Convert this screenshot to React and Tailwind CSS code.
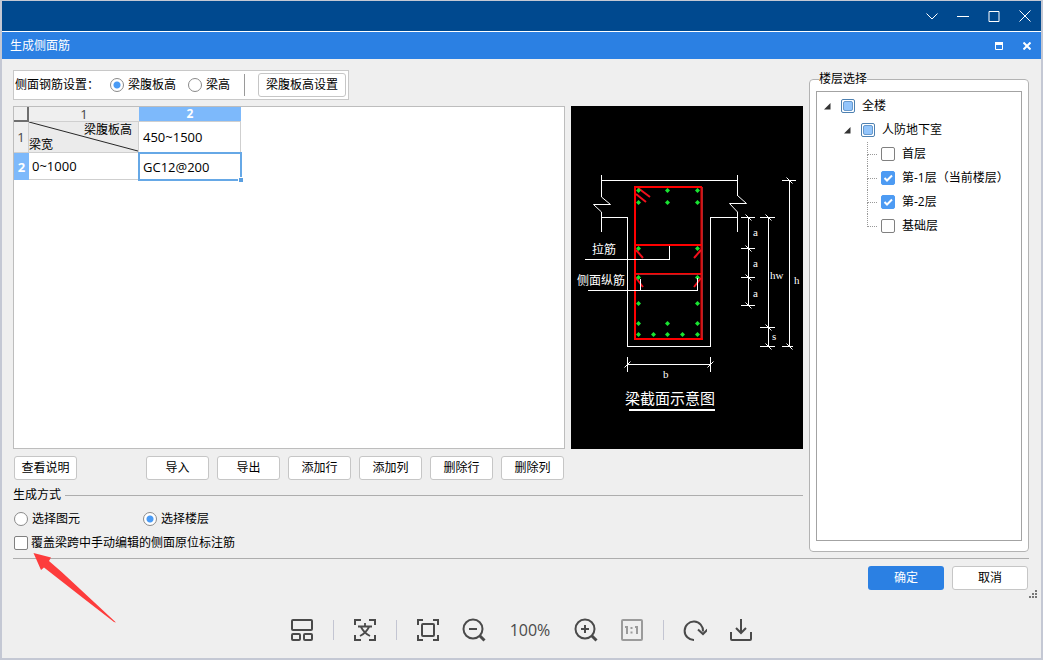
import { useState } from "react";
import clsx from "clsx";

const buttonClass =
  "h-6 rounded-[3px] border border-[#c6c6c6] bg-white text-xs text-black hover:bg-[#f5f9ff]";
const radioClass =
  "m-0 size-3.5 shrink-0 appearance-none rounded-full border border-[#8a8a8a] bg-white checked:bg-[radial-gradient(circle,#4a9bf5_3px,#fff_4px)]";

const tableActions = ["导入", "导出", "添加行", "添加列", "删除行", "删除列"];

const floors = [
  { id: "f1", label: "首层", checked: false },
  { id: "b1", label: "第-1层（当前楼层）", checked: true },
  { id: "b2", label: "第-2层", checked: true },
  { id: "base", label: "基础层", checked: false },
];

// Rebar positions in the beam section
const rebars = [
  [67, 84], [96, 84], [126, 84],
  [67, 96], [96, 96], [126, 96],
  [67, 142], [126, 142],
  [67, 171], [126, 171],
  [67, 197], [126, 197],
  [67, 217], [96, 217], [126, 217],
  [67, 228], [82, 228], [96, 228], [111, 228], [126, 228],
];

// [x, y, left, right] of every tick on the vertical dimension lines
const ticks = [
  [177, 111, 170, 184], [177, 142, 170, 184], [177, 171, 170, 184], [177, 199, 170, 184],
  [197, 111, 189, 204], [197, 221, 189, 204], [197, 240, 189, 204],
  [218, 74, 211, 225], [218, 240, 211, 222],
];

function AppTitleBar() {
  return (
    <header className="flex h-[30px] items-center justify-end bg-[#00498f] pr-px text-white">
      <button aria-label="更多" className="flex w-[31px] justify-center">
        <svg width="12" height="12" fill="none" stroke="currentColor">
          <path d="M0.500 3.500 6 9l5.500-5.500" />
        </svg>
      </button>
      <button aria-label="最小化" className="flex w-[31px] justify-center">
        <svg width="12" height="12" stroke="currentColor">
          <path d="M0 6.500h12" />
        </svg>
      </button>
      <button aria-label="最大化" className="flex w-[31px] justify-center">
        <svg width="12" height="12" fill="none" stroke="currentColor">
          <path d="M1 1.500h10v10H1z" />
        </svg>
      </button>
      <button aria-label="关闭" className="flex w-[31px] justify-center">
        <svg width="12" height="12" stroke="currentColor">
          <path d="m0.500 0.500 11 11m0-11-11 11" />
        </svg>
      </button>
    </header>
  );
}

function DialogTitleBar() {
  return (
    <div className="mt-px flex h-[27px] items-center bg-[#2b80e3] pl-2 text-white">
      <h1 className="flex-1 text-xs">生成侧面筋</h1>
      <button aria-label="还原" className="flex w-7 justify-center">
        <svg width="8" height="8" fill="none" stroke="currentColor">
          <path d="M0.500 1v6.500h7V1" />
          <path d="M0 1.500h8" strokeWidth="3" />
        </svg>
      </button>
      <button aria-label="关闭对话框" className="flex w-7 justify-center">
        <svg width="8" height="8" stroke="currentColor" strokeWidth="2">
          <path d="m0.500 0.500 7 7m0-7-7 7" />
        </svg>
      </button>
    </div>
  );
}

function SettingsBar() {
  const [mode, setMode] = useState("web");

  return (
    <div className="flex h-[30px] items-center self-start border border-[#c8c8c8] bg-white pr-0.5 pl-px">
      <span className="w-[95px]">侧面钢筋设置：</span>
      <label className="flex w-[78px] items-center gap-1">
        <input
          type="radio"
          name="heightMode"
          className={radioClass}
          checked={mode === "web"}
          onChange={() => setMode("web")}
        />
        梁腹板高
      </label>
      <label className="flex w-14 items-center gap-1">
        <input
          type="radio"
          name="heightMode"
          className={radioClass}
          checked={mode === "beam"}
          onChange={() => setMode("beam")}
        />
        梁高
      </label>
      <span className="mr-[13px] h-[22px] w-px bg-[#9a9a9a]" />
      <button className={clsx(buttonClass, "w-[88px]")}>梁腹板高设置</button>
    </div>
  );
}

function RebarTable() {
  return (
    <div className="min-w-0 flex-1 border border-[#bdbdbd] bg-white">
      <table className="w-[227px] table-fixed border-separate border-spacing-0 text-[13px] leading-4">
        <colgroup>
          <col className="w-[15px]" />
          <col className="w-[110px]" />
          <col className="w-[102px]" />
        </colgroup>
        <thead>
          <tr className="h-[15px]">
            <td className="border-r-2 border-b-2 border-[#6e6e6e] bg-[#f0f0f0] p-0" />
            <th className="border-b border-[#cfcfcf] bg-[#efefef] p-0 text-[13px] leading-3.5 font-normal text-[#444]">
              1
            </th>
            <th className="border-b border-[#cfcfcf] bg-[#7db9fb] p-0 text-xs leading-3.5 font-bold text-white">
              2
            </th>
          </tr>
        </thead>
        <tbody>
          <tr className="h-[31px]">
            <th className="border-r border-b border-[#cfcfcf] bg-[#efefef] p-0 font-normal text-[#444]">
              1
            </th>
            <td className="relative border-r border-b border-[#cfcfcf] bg-[#ebebeb] p-0 text-xs leading-[15px]">
              <svg
                className="absolute inset-0 size-full"
                viewBox="0 0 110 31"
                preserveAspectRatio="none"
              >
                <path d="M0 0 110 30" stroke="#222" />
              </svg>
              <div className="relative pr-1.5 text-right">梁腹板高</div>
              <div className="relative">梁宽</div>
            </td>
            <td className="border-r border-b border-[#cfcfcf] px-1 py-0">450~1500</td>
          </tr>
          <tr className="h-[27px]">
            <th className="bg-[#7db9fb] p-0 font-bold text-white">2</th>
            <td className="border-r border-b border-[#cfcfcf] px-[3px] py-0">0~1000</td>
            <td className="relative px-1 py-0 outline-2 -outline-offset-1 outline-[#66a8e6]">
              GC12@200
              <span className="absolute -right-0.5 -bottom-0.5 size-[5px] border-t border-l border-white bg-[#5a9fe0]" />
            </td>
          </tr>
        </tbody>
      </table>
    </div>
  );
}

function BeamSection() {
  return (
    <svg
      viewBox="0 0 232 343"
      className="h-[343px] w-[232px] shrink-0 bg-black"
      role="img"
      aria-label="梁截面示意图"
    >
      {/* Concrete outline */}
      <g fill="none" stroke="#fff" shapeRendering="crispEdges">
        <path d="M30.500 74.500h136M30.500 111.500h26v129h83v-129h27" />
        <path d="M30.500 69v22M30.500 106v20M166.500 69v21M166.500 106v20" />
      </g>
      <g fill="none" stroke="#fff">
        <path d="m30.500 91 9 7.500h-17l8 7.500M166.500 89.500l9 8h-17l8 8.500" />
      </g>

      {/* Stirrup and ties */}
      <g fill="none" strokeWidth="2">
        <path d="M131 81v152M64 168h67" stroke="#b02226" />
        <path d="M131 81H64v152h68M64 139h67" stroke="#f00" />
        <path d="M130 82v151M64 167.500h67" stroke="#f00" strokeWidth="1" />
        <path
          d="m67 82 12 9M65 88l10 8M65 144l7 8M130 144l-7 8M65 172l7 9M130 172l-7 9"
          stroke="#f0101c"
        />
      </g>
      <g fill="#19e432">
        {rebars.map(([x, y]) => (
          <path key={`${x}-${y}`} d={`M${x - 2} ${y + 0.5}l2.500-2.500 2.500 2.500-2.500 2.500z`} />
        ))}
      </g>

      {/* Leaders and dimension lines */}
      <g fill="none" stroke="#fff" shapeRendering="crispEdges">
        <path d="M14 153.500h84.500V140M17 184.500h109.500V172M69.500 173v11" />
        <path d="M177.500 111v89M197.500 111v130M218.500 74v167" />
        <path d="M56 258.500h84M56.500 251v15M139.500 251v15" />
        {ticks.map(([x, y, x1, x2]) => (
          <path key={`${x}-${y}`} d={`M${x1} ${y + 0.5}H${x2}`} />
        ))}
      </g>
      <g stroke="#fff">
        {ticks.map(([x, y]) => (
          <path key={`${x}-${y}`} d={`M${x - 2.5} ${y - 2.5}l6 6`} />
        ))}
        <path d="m53.500 261.500 6-6M136.500 261.500l6-6" />
        <path d="M58 304h86" strokeWidth="2" />
      </g>

      <g fill="#fff" className="text-xs">
        <text x="21" y="148">拉筋</text>
        <text x="6" y="179">侧面纵筋</text>
      </g>
      <text x="54" y="298" fill="#fff" className="text-[15px]">
        梁截面示意图
      </text>
      <g fill="#fff" className="font-['Liberation_Serif',serif] text-[11px]">
        <text x="182" y="130">a</text>
        <text x="182" y="161">a</text>
        <text x="182" y="191">a</text>
        <text x="199" y="173">hw</text>
        <text x="223" y="178">h</text>
        <text x="201" y="234">s</text>
        <text x="92" y="272">b</text>
      </g>
    </svg>
  );
}

function GenerateMode() {
  const [mode, setMode] = useState("floor");

  return (
    <section className="mt-1.5 flex flex-col gap-1.5 leading-[18px]">
      <div className="flex items-center gap-1">
        <h2>生成方式</h2>
        <span className="h-px flex-1 bg-[#adadad]" />
      </div>
      <div className="flex pl-px">
        <label className="flex w-[129px] items-center gap-1">
          <input
            type="radio"
            name="target"
            className={radioClass}
            checked={mode === "element"}
            onChange={() => setMode("element")}
          />
          选择图元
        </label>
        <label className="flex items-center gap-1">
          <input
            type="radio"
            name="target"
            className={radioClass}
            checked={mode === "floor"}
            onChange={() => setMode("floor")}
          />
          选择楼层
        </label>
      </div>
      <div className="relative flex pl-px">
        <label className="flex items-center gap-[3px]">
          <FloorCheckbox />
          覆盖梁跨中手动编辑的侧面原位标注筋
        </label>
        {/* Hint arrow */}
        <svg
          width="84"
          height="72"
          className="pointer-events-none absolute top-[18px] left-5 z-10"
          aria-hidden="true"
        >
          <path
            d="m0.500 1 17.500 4.500-2 3.500Q29 20 40 30.500L83 70.500 81 70 50 46 11 15.500 8 18z"
            fill="#fd3c3c"
          />
        </svg>
      </div>
    </section>
  );
}

function FloorCheckbox({ checked = false, partial = false }) {
  const [value, setValue] = useState(checked);

  if (partial) {
    return (
      <input
        type="checkbox"
        ref={(el) => {
          if (el) el.indeterminate = true;
        }}
        className="m-0 size-3.5 shrink-0 appearance-none rounded-[2px] border border-[#4d80b0] bg-white before:m-px before:block before:size-2.5 before:rounded-[2px] before:border before:border-[#6899cc] before:bg-[#93c5fb] before:content-['']"
      />
    );
  }

  return (
    <span className="relative flex size-3.5 shrink-0">
      <input
        type="checkbox"
        checked={value}
        onChange={(e) => setValue(e.target.checked)}
        className="m-0 size-3.5 appearance-none rounded-[2px] border border-[#808080] bg-white checked:border-[#4d9bf3] checked:bg-[#4d9bf3]"
      />
      {value && (
        <svg
          viewBox="0 0 14 14"
          className="pointer-events-none absolute inset-0"
          fill="none"
          stroke="#fff"
          strokeWidth="2"
        >
          <path d="m3.500 7 2.500 2.500 5-5" />
        </svg>
      )}
    </span>
  );
}

function Expander() {
  return (
    <button aria-label="折叠" className="flex w-[7px] justify-center">
      <svg width="7" height="7">
        <path d="M6.500 0v6.500H0z" fill="#333" />
      </svg>
    </button>
  );
}

function FloorTree() {
  return (
    <fieldset className="flex w-[220px] shrink-0 flex-col rounded border border-[#b3b3b3] bg-white px-1.5 pt-[3px] pb-2.5">
      <legend className="ml-[3px] leading-[18px]">楼层选择</legend>
      <div className="flex-1 border border-[#a3a3a3] pt-0.5 pl-[7px]">
        <div className="flex h-6 items-center">
          <Expander />
          <label className="ml-2.5 flex items-center gap-[7px]">
            <FloorCheckbox partial />
            全楼
          </label>
        </div>
        <div className="flex h-6 items-center pl-5">
          <Expander />
          <label className="ml-2.5 flex items-center gap-[7px]">
            <FloorCheckbox partial />
            人防地下室
          </label>
        </div>
        <ul className="pl-[43px]">
          {floors.map((floor, index) => (
            <li key={floor.id} className="flex h-6 items-center gap-1">
              <span className="flex h-6 w-2.5 flex-col">
                <span className="h-[13px] border-b border-l border-dotted border-[#999]" />
                {index < floors.length - 1 && (
                  <span className="flex-1 border-l border-dotted border-[#999]" />
                )}
              </span>
              <label className="flex items-center gap-[7px]">
                <FloorCheckbox checked={floor.checked} />
                {floor.label}
              </label>
            </li>
          ))}
        </ul>
      </div>
    </fieldset>
  );
}

function ToolButton({ label, className, children }) {
  return (
    <button aria-label={label} className={clsx("size-6", className)}>
      <svg viewBox="0 0 24 24" fill="none" stroke="currentColor" strokeWidth="2">
        {children}
      </svg>
    </button>
  );
}

function Separator() {
  return <span className="-mx-[3px] h-5 w-px bg-[#c3c5d2]" />;
}

function ViewerToolbar() {
  return (
    <nav className="mt-[28px] flex items-center justify-center gap-[22px] text-[#4a4a4a]">
      <ToolButton label="缩略图">
        <rect x="2" y="2" width="20" height="10" rx="1" />
        <rect x="2" y="16" width="8" height="6" rx="1" />
        <rect x="14" y="16" width="8" height="6" rx="1" />
      </ToolButton>
      <Separator />
      <ToolButton label="文字识别">
        <path d="M2 7V2h6M16 2h6v5M22 17v5h-6M8 22H2v-5" />
        <path d="M12 5v3M5 8.500h14M8 9q3 6 9 9M16 9q-3 6-9 9" strokeWidth="1.800" />
      </ToolButton>
      <Separator />
      <ToolButton label="适应窗口">
        <path d="M2 7V2h5M17 2h5v5M22 17v5h-5M7 22H2v-5" />
        <rect x="6" y="6" width="12" height="12" rx="1" />
      </ToolButton>
      <ToolButton label="缩小">
        <circle cx="11" cy="11" r="9.500" />
        <path d="M7 11h8" />
        <path d="m17.500 17.500 5 5" strokeWidth="3" />
      </ToolButton>
      <span className="w-11 text-center text-base leading-6">100%</span>
      <ToolButton label="放大">
        <circle cx="11" cy="11" r="9.500" />
        <path d="M7 11h8M11 7v8" />
        <path d="m17.500 17.500 5 5" strokeWidth="3" />
      </ToolButton>
      <ToolButton label="原始大小" className="text-[#9b9b9b]">
        <rect x="2" y="2" width="20" height="20" rx="1" />
        <path d="M5 9h2v7M15 9h2v7M11.500 9v2M11.500 13.500v2" strokeWidth="2" />
      </ToolButton>
      <Separator />
      <ToolButton label="旋转">
        <path d="M11 22a9.200 9.200 0 1 1 9-8.500" />
        <path d="m15 11.500 5 4.500 4.500-4.500" />
      </ToolButton>
      <ToolButton label="下载">
        <path d="M2 14v7q0 1 1 1h18q1 0 1-1v-7M12 1v14M7 10l5 5 5-5" />
      </ToolButton>
    </nav>
  );
}

export default function App() {
  return (
    <div className="flex min-h-screen flex-col border-x-2 border-t border-b-2 border-[#c4c8d4] bg-white font-['Open_Sans','Noto_Sans_CJK_SC',sans-serif] text-xs text-black">
      <AppTitleBar />
      <DialogTitleBar />
      <main className="flex flex-1 flex-col bg-[#efefef] pt-[11px]">
        <div className="mr-3 ml-[11px] flex gap-1.5">
          <div className="flex min-w-0 flex-1 flex-col">
            <SettingsBar />
            <div className="mt-1.5 flex gap-1.5">
              <RebarTable />
              <BeamSection />
            </div>
            <div className="mt-[7px] flex gap-2 pl-px">
              <button className={clsx(buttonClass, "mr-[61px] w-[63px]")}>查看说明</button>
              {tableActions.map((action) => (
                <button key={action} className={clsx(buttonClass, "w-[63px]")}>
                  {action}
                </button>
              ))}
            </div>
            <GenerateMode />
          </div>
          <FloorTree />
        </div>
        <footer className="mt-1.5 mr-3 ml-[11px] flex justify-end gap-2 border-t border-[#adadad] pt-[7px] pr-px">
          <button className="h-6 w-[76px] rounded-[3px] bg-[#2b80e3] text-white">确定</button>
          <button className={clsx(buttonClass, "w-[76px]")}>取消</button>
        </footer>
        {/* Resize grip */}
        <svg width="9" height="9" className="mr-[3px] -mb-[9px] self-end" fill="#777">
          <path d="M6 0h2v2H6zM3 3h2v2H3zM6 3h2v2H6zM0 6h2v2H0zM3 6h2v2H3zM6 6h2v2H6z" />
        </svg>
        <ViewerToolbar />
      </main>
    </div>
  );
}
